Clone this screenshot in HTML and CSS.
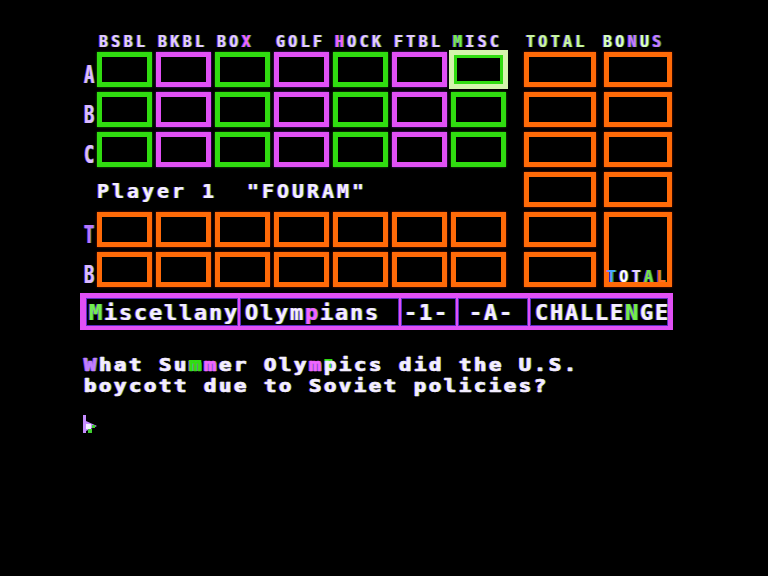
FILE: index.html
```html
<!DOCTYPE html>
<html>
<head>
<meta charset="utf-8">
<link rel="stylesheet" href="styles.css">
</head>
<body>
<div class="screen">
  <div class="board">
    <div class="lbl"></div>
    <div class="hd">BSBL</div>
    <div class="hd">BKBL</div>
    <div class="hd">BO<span class="mg">X</span></div>
    <div class="hd">GOLF</div>
    <div class="hd"><span class="mg">H</span>OCK</div>
    <div class="hd">FTBL</div>
    <div class="hd"><span class="gr">M</span>ISC</div>
    <div class="hd tot tg">TOTAL</div>
    <div class="hd bon bg">BO<span class="pu">N</span>U<span class="pu">S</span></div>

    <div class="lbl">A</div>
    <div class="box g"></div><div class="box m"></div><div class="box g"></div><div class="box m"></div><div class="box g"></div><div class="box m"></div><div class="box g sel"></div>
    <div class="box o tot"></div><div class="box o bon"></div>

    <div class="lbl">B</div>
    <div class="box g"></div><div class="box m"></div><div class="box g"></div><div class="box m"></div><div class="box g"></div><div class="box m"></div><div class="box g"></div>
    <div class="box o tot"></div><div class="box o bon"></div>

    <div class="lbl">C</div>
    <div class="box g"></div><div class="box m"></div><div class="box g"></div><div class="box m"></div><div class="box g"></div><div class="box m"></div><div class="box g"></div>
    <div class="box o tot"></div><div class="box o bon"></div>

    <div class="lbl"></div>
    <div class="player">Player 1  "FOURAM"</div>
    <div class="box o tot"></div><div class="box o bon"></div>

    <div class="lbl lt">T</div>
    <div class="box o"></div><div class="box o"></div><div class="box o"></div><div class="box o"></div><div class="box o"></div><div class="box o"></div><div class="box o"></div>
    <div class="box o tot"></div>
    <div class="box o bon big"><span class="totlbl"><span class="c-b">T</span><span class="c-w">O</span><span class="c-l">T</span><span class="c-g">A</span><span class="c-o">L</span></span></div>

    <div class="lbl">B</div>
    <div class="box o"></div><div class="box o"></div><div class="box o"></div><div class="box o"></div><div class="box o"></div><div class="box o"></div><div class="box o"></div>
    <div class="box o tot"></div>
  </div>

  <div class="bar">
    <div class="cell c1"><span class="gr">M</span>iscellany</div>
    <div class="cell c2">Olym<span class="mg">p</span>ians</div>
    <div class="cell c3">-1-</div>
    <div class="cell c4">-A-</div>
    <div class="cell c5">CHALLE<span class="gr">N</span>GE</div>
  </div>

  <div class="question">
    <div class="qline"><span class="pu">W</span>hat Su<span class="blk-g">m</span><span class="blk-m">m</span>er Oly<span class="mg">m</span><span class="blk-g2">p</span>ics did the U.S.</div>
    <div class="qline">boycott due to Soviet policies?</div>
  </div>

  <div class="cursor">
    <svg width="16" height="18" viewBox="0 0 16 18">
      <rect x="0" y="0" width="3" height="18" fill="#c58cff"/>
      <polygon points="3,6 14,11 3,16" fill="#c58cff"/>
      <rect x="3" y="9" width="5" height="5" fill="#f4f0ff"/>
      <rect x="5" y="14" width="4" height="4" fill="#40d030"/>
      <rect x="9" y="10" width="3" height="3" fill="#40d030"/>
    </svg>
  </div>
</div>
</body>
</html>
```

FILE: styles.css
```css
html, body {
  margin: 0;
  padding: 0;
  background: #000;
}

body {
  width: 768px;
  height: 576px;
  overflow: hidden;
  font-family: "DejaVu Sans Mono", "Liberation Mono", monospace;
  font-weight: bold;
  color: #f4eeff;
  text-shadow: -1px 0 rgba(170, 70, 255, 0.85), 1px 0 rgba(70, 230, 70, 0.6);
}

.screen {
  padding-top: 32px;
}

.board {
  display: grid;
  grid-template-columns: 13px repeat(7, 55px) 10px 72px 0 68px;
  grid-template-rows: 15px repeat(6, 35px);
  column-gap: 4px;
  row-gap: 5px;
  margin-left: 80px;
}

.hd {
  font-size: 15px;
  line-height: 15px;
  padding: 3px 0 0 2px;
  letter-spacing: 3.3px;
  white-space: nowrap;
  color: #e2ccff;
}

.hd.bon {
  margin-left: -3px;
}

.tg {
  color: #c8f4a8;
}

.bg {
  color: #d8ffc8;
}

.mg {
  color: #ee66ff;
}

.gr {
  color: #70ee50;
}

.pu {
  color: #c080ff;
}

.lbl {
  grid-column: 1;
  font-size: 24px;
  line-height: 24px;
  padding: 11px 0 0 5.6px;
  transform: scaleX(0.72);
  transform-origin: 0 0;
  color: #dcbcff;
}

.lbl.lt {
  color: #b478ff;
}

.box {
  box-sizing: border-box;
  border: 5px solid;
}

.g {
  border-color: #30dc10;
  box-shadow: 0 0 2px rgba(40, 160, 10, 0.7);
}

.m {
  border-color: #e050f5;
  box-shadow: 0 0 2px rgba(120, 40, 200, 0.8);
}

.o {
  border-color: #ff6a08;
  box-shadow: 0 0 2px rgba(170, 30, 0, 0.8);
}

.sel {
  border: 3px solid #d4f4ac;
  box-shadow: 0 0 0 2px #d4f4ac, inset 0 0 0 3px #30dc10;
}

.tot {
  grid-column: 10;
}

.bon {
  grid-column: 12;
}

.big {
  grid-row: span 2;
  display: flex;
  align-items: flex-end;
}

.totlbl {
  font-size: 15px;
  line-height: 15px;
  letter-spacing: 3.3px;
  margin: 0 0 -3px -2px;
  white-space: nowrap;
}

.c-b { color: #48a8ff; }
.c-w { color: #ffffff; }
.c-l { color: #e8d8ff; }
.c-g { color: #70e050; }
.c-o { color: #ff7020; }

.player {
  grid-column: 2 / 9;
  font-size: 20px;
  line-height: 20px;
  letter-spacing: 2.96px;
  padding-top: 9px;
  white-space: pre;
}

.bar {
  display: flex;
  gap: 4px;
  box-sizing: border-box;
  width: 593px;
  height: 37px;
  margin: 6px 0 0 80px;
  padding: 6px 6px 5px 7px;
  background: #e050f5;
}

.cell {
  background: #000;
  height: 26px;
  box-sizing: border-box;
  font-size: 22px;
  line-height: 26px;
  padding-top: 1px;
  letter-spacing: 1.76px;
  white-space: nowrap;
  box-shadow: 0 0 0 1px #5a2cc0;
}

.c1 { width: 150px; padding-left: 2px; }
.c2 { width: 157px; padding-left: 4px; }
.c3 { width: 53px; padding-left: 2px; }
.c4 { width: 68px; padding-left: 10px; }
.c5 { width: 136px; padding-left: 4px; }

.question {
  width: max-content;
  margin: 24px 0 0 84px;
  font-size: 18px;
  line-height: 21px;
  letter-spacing: 2.2px;
  -webkit-text-stroke: 0.6px currentColor;
  transform: scaleX(1.15);
  transform-origin: 0 0;
}

.qline {
  height: 21px;
  white-space: nowrap;
}

.blk-g {
  color: #30dc10;
  background: linear-gradient(#30dc10, #30dc10) no-repeat 0 6px / 11px 11px;
}

.blk-m {
  color: #ee66ff;
}

.blk-g2 {
  background: linear-gradient(#30dc10, #30dc10) no-repeat 0 5px / 7px 11px;
}

.cursor {
  margin: 19px 0 0 83px;
  height: 18px;
}

.cursor svg {
  display: block;
}
```
